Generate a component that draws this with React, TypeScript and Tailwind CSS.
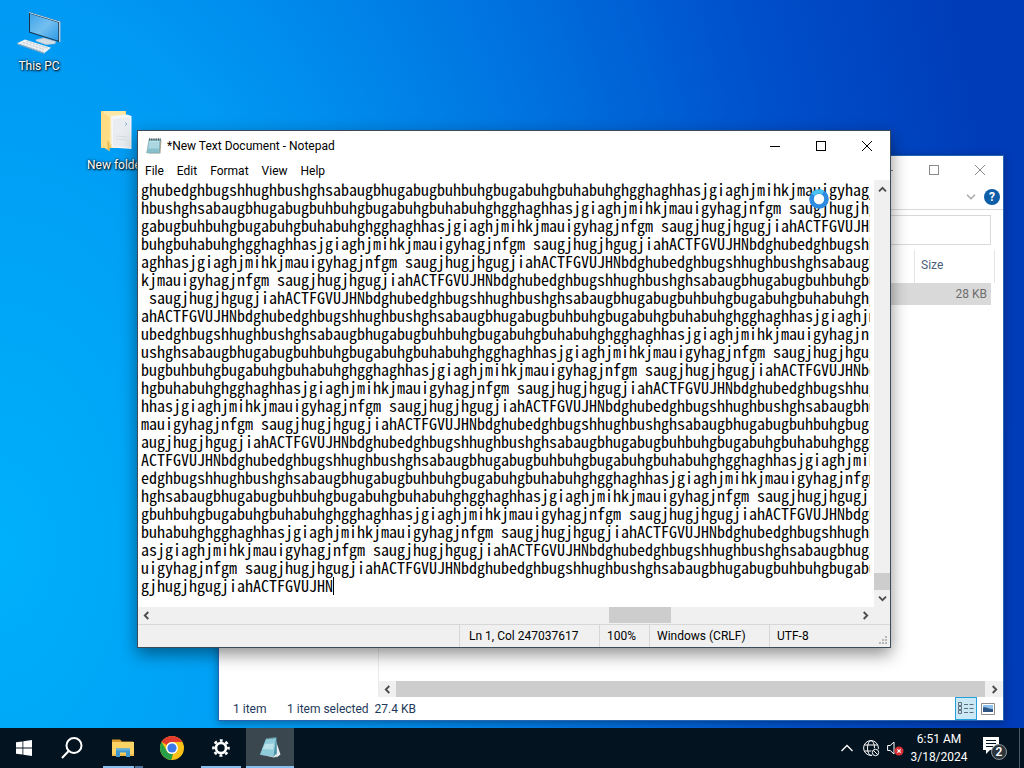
import React from 'react';
import type { ReactNode } from 'react';

const PHRASE =
  'saugjhugjhgugjiahACTFGVUJHNbdghubedghbugshhughbushghsabaugbhugabugbuhbuhgbugabuhgbuhabuhghgghaghhasjgiaghjmihkjmauigyhagjnfgm ';

// Notepad breaks very long lines every 1024 characters, so each row starts
// 16 characters further into the phrase than the one above it.
const ROWS = 23;
const FIRST_START = 29;
const SHIFT = 1024 % PHRASE.length;

const documentText = Array.from({ length: ROWS }, (_, i) => {
  const start = (FIRST_START + i * SHIFT) % PHRASE.length;
  const length = i === ROWS - 1 ? 24 : 96;
  return (PHRASE + PHRASE).slice(start, start + length);
}).join('\n');

const MinimizeIcon = () => (
  <svg width="10" height="10" viewBox="0 0 10 10" stroke="currentColor" shapeRendering="crispEdges">
    <path d="M0 5.5h10" />
  </svg>
);

const MaximizeIcon = () => (
  <svg width="10" height="10" viewBox="0 0 10 10" fill="none" stroke="currentColor" shapeRendering="crispEdges">
    <rect x="0.5" y="0.5" width="9" height="9" />
  </svg>
);

const CloseIcon = () => (
  <svg width="10" height="10" viewBox="0 0 10 10" stroke="currentColor">
    <path d="M0 0l10 10M10 0L0 10" />
  </svg>
);

const ArrowIcon = ({ d }: { d: string }) => (
  <svg width="9" height="9" viewBox="0 0 9 9" fill="none" stroke="#4d4d4d" strokeWidth="1.9">
    <path d={d} />
  </svg>
);

const UP = 'M1 6.3l3.5-3.5L8 6.3';
const DOWN = 'M1 2.7l3.5 3.5L8 2.7';
const LEFT = 'M6.3 1L2.8 4.5 6.3 8';
const RIGHT = 'M2.7 1l3.5 3.5L2.7 8';

const NotepadIcon = ({ className }: { className: string }) => (
  <svg className={className} viewBox="0 0 16 16">
    <path d="M3.5 2h12l-1 13.6H3z" fill="#b9ae96" />
    <path d="M3 1.5h11.4L13.3 15H.7z" fill="#8cc3cf" stroke="#6f9aa3" strokeWidth=".5" />
    <path d="M3.4 3h9.8l-.5 7.5H2.4z" fill="#bfe4ea" />
    <path d="M2.9 5h9.8M2.7 7h9.8M2.4 9h9.9M2.1 11h10M1.9 13h10.1" stroke="#79b3c0" strokeWidth=".5" />
    <path d="M3.5.3v2.2M5.3.3v2.2M7.1.3v2.2M8.9.3v2.2M10.7.3v2.2M12.5.3v2.2M14.2.3v2.2" stroke="#3f4c52" strokeWidth=".9" />
  </svg>
);

const ThisPcIcon = () => (
  <svg width="48" height="48" viewBox="0 0 48 48">
    <defs>
      <linearGradient id="screen" x1="0" y1="0" x2="1" y2="1">
        <stop offset="0" stopColor="#3fa5e8" />
        <stop offset=".5" stopColor="#74bff0" />
        <stop offset="1" stopColor="#2c9ae6" />
      </linearGradient>
    </defs>
    <path d="M14 4l31 9.5v20.8L14 24.5z" fill="#17324a" />
    <path d="M14 4l31 9.5v1L14 5z" fill="#c9dcea" />
    <path d="M44 13.5l1.4.3v20.5l-1.4-.3z" fill="#b9c9d4" />
    <path d="M15 5.8l28.3 8.6v18.4L15 23.8z" fill="url(#screen)" />
    <path d="M27 29.5l7 2.2v2.3l-7-2z" fill="#b4c3cf" />
    <path d="M21 31.5l8-1.5 12 3.5-1 2.3-9 .9-10-3.7z" fill="#d3dde6" stroke="#9fb3c2" strokeWidth=".5" />
    <path d="M2 35.2l8-3.7 26 8.3-6.5 5.2z" fill="#eef2f5" />
    <path d="M2 35.2L29.5 45v.9L2 36.2z" fill="#93a9ba" />
    <path d="M8 34.5l22 7.3M11.5 33.3l21 6.9M5 36l23 7.6" stroke="#a9b7c2" strokeWidth=".7" strokeDasharray="2.4 .9" />
  </svg>
);

const FolderIcon = () => (
  <svg width="32" height="45" viewBox="0 0 32 45">
    <path d="M1 1h25v37H1z" fill="#f2d37b" />
    <path d="M3 1h22v33H3z" fill="#fbe7a6" />
    <path d="M11 6l16-1.5 4.5 1.5V39l-20-1.5z" fill="#f4f6f8" />
    <path d="M13 9l17-2v30l-17-1z" fill="#e9edf1" />
    <path d="M25 12.5l2 1.5-2 2" stroke="#7fa6d9" strokeWidth=".8" fill="none" />
    <path d="M16 26l11 1M16 29l11 1" stroke="#d3dae0" strokeWidth=".8" />
    <path d="M1 1l8.500 6.500V41L1 36z" fill="#ffdc83" />
    <path d="M7.5 30l2 3v8l-2-1.4z" fill="#e8b84e" />
  </svg>
);

const WindowControls = ({ color, size }: { color: string; size: string }) => (
  <div className={`flex ${color}`}>
    <button aria-label="Minimize" className={`flex w-[46px] items-center justify-center ${size}`}>
      <MinimizeIcon />
    </button>
    <button aria-label="Maximize" className={`flex w-[46px] items-center justify-center ${size}`}>
      <MaximizeIcon />
    </button>
    <button aria-label="Close" className={`flex w-[46px] items-center justify-center ${size}`}>
      <CloseIcon />
    </button>
  </div>
);

const DesktopIcon = ({ label, className, children }: { label: string; className: string; children: ReactNode }) => (
  <button className={`absolute flex w-20 flex-col items-center gap-[2px] text-white ${className}`}>
    {children}
    <span className="text-xs [text-shadow:1px_1px_2px_#000,0_0_3px_#000]">{label}</span>
  </button>
);

const ExplorerWindow = () => (
  <section
    aria-label="File Explorer"
    className="absolute left-[218px] top-[155px] flex h-[566px] w-[786px] flex-col border border-[#2565b4] bg-white text-xs shadow-[0_2px_8px_rgba(0,0,0,0.35)]"
  >
    <header className="flex justify-end">
      <WindowControls color="text-[#8a8a8a]" size="h-7" />
    </header>
    <div className="flex h-[26px] items-center justify-end gap-2 border-b border-[#d9dadb] pr-[3px]">
      <button aria-label="Expand the ribbon">
        <svg width="10" height="6" viewBox="0 0 10 6" fill="none" stroke="#a8a8a8" strokeWidth="1.5">
          <path d="M1 .8l4 4 4-4" />
        </svg>
      </button>
      <button
        aria-label="Help"
        className="flex h-4 w-4 items-center justify-center rounded-full bg-[#0f5ea8] text-xs font-bold text-white"
      >
        ?
      </button>
    </div>
    <div className="flex px-3 py-[5px]">
      <input aria-label="Search" type="text" className="h-[30px] w-full border border-[#d9d9d9] outline-none" />
    </div>
    <div className="flex min-h-0 grow">
      <nav aria-label="Folders" className="w-40 border-r border-[#ececec]" />
      <div className="flex min-w-0 grow flex-col">
        <table className="w-[616px] table-fixed border-separate border-spacing-0">
          <thead>
            <tr className="h-[33px] text-left text-[#4c607a]">
              <th aria-label="Name" />
              <th className="w-[81px] border-x border-[#e5e5e5] pb-[3px] pl-[6px] font-normal">Size</th>
            </tr>
          </thead>
          <tbody>
            <tr className="h-[22px] text-right text-[#6d6d6d]">
              <td className="bg-[#d9d9d9]" />
              <td className="border-r-4 border-white bg-[#d9d9d9] pr-1">28 KB</td>
            </tr>
          </tbody>
        </table>
        <div className="mt-auto flex h-4 items-center bg-[#f0f0f0]">
          <button aria-label="Scroll left" className="flex w-[17px] justify-center">
            <ArrowIcon d={LEFT} />
          </button>
          <div className="h-full grow bg-[#cdcdcd]" />
          <button aria-label="Scroll right" className="flex w-[18px] justify-center">
            <ArrowIcon d={RIGHT} />
          </button>
        </div>
      </div>
    </div>
    <footer className="flex h-[23px] items-center pl-[14px] text-[#1e395b]">
      <span className="w-[54px]">1 item</span>
      <span>1 item selected&nbsp; 27.4 KB</span>
      <div className="ml-auto flex h-full items-center pr-1">
        <button
          aria-label="Details view"
          className="flex h-[23px] w-[22px] items-center justify-center border border-[#26a0da] bg-[#cbe8f6]"
        >
          <svg width="16" height="13" viewBox="0 0 16 13" fill="none" stroke="#5f6f7c" strokeWidth="1">
            <path d="M.5.5h3v3h-3zM.5 4.5h3v3h-3zM.5 8.5h3v3h-3z" />
            <path d="M6 2.5h4M11.5 2.5h4M6 6.5h4M11.5 6.5h4M6 10.5h4M11.5 10.5h4" />
          </svg>
        </button>
        <button aria-label="Large icons view" className="flex h-[23px] w-[22px] items-center justify-center">
          <svg width="14" height="12" viewBox="0 0 14 12">
            <path d="M.5.5h13v11H.5z" fill="#fff" stroke="#8b8b8b" />
            <path d="M2 2h10v7H2z" fill="#8fc1ea" />
            <path d="M2 4.5c4-1 6 2 10 1.5v3H2z" fill="#2d5583" />
          </svg>
        </button>
      </div>
    </footer>
  </section>
);

const NotepadWindow = () => (
  <section
    aria-label="Notepad"
    className="absolute left-[137px] top-[130px] flex h-[518px] w-[754px] flex-col border border-[#3b4b59] bg-white text-xs text-black shadow-[0_6px_16px_rgba(0,0,0,0.45)]"
  >
    <header className="flex h-[30px] items-center justify-between pl-2">
      <div className="flex items-center gap-[5px]">
        <NotepadIcon className="h-4 w-4" />
        <h1>*New Text Document - Notepad</h1>
      </div>
      <WindowControls color="text-black" size="h-[30px]" />
    </header>
    <nav className="flex h-[19px] items-center gap-[13px] pl-[7px]">
      <button>File</button>
      <button>Edit</button>
      <button>Format</button>
      <button>View</button>
      <button>Help</button>
    </nav>
    <div className="flex grow">
      <div className="relative grow pl-[3px] pr-1">
        <textarea
          aria-label="Text editor"
          spellCheck={false}
          wrap="off"
          defaultValue={documentText}
          className="block h-full w-full resize-none overflow-hidden whitespace-pre font-['Noto_Sans_Mono_CJK_SC','Liberation_Mono',monospace] text-base leading-[18px] outline-none"
        />
        {/* caret */}
        <span className="absolute left-[195px] top-[397px] h-[18px] w-px bg-black" />
      </div>
      <div className="flex w-4 flex-col items-center bg-[#f0f0f0]">
        <button aria-label="Scroll up" className="flex h-[19px] items-center">
          <ArrowIcon d={UP} />
        </button>
        <div className="mt-auto h-[17px] w-full bg-[#cdcdcd]" />
        <button aria-label="Scroll down" className="flex h-[17px] items-center">
          <ArrowIcon d={DOWN} />
        </button>
      </div>
    </div>
    <div className="flex h-[17px] items-center bg-[#f0f0f0] pr-[17px]">
      <button aria-label="Scroll left" className="flex w-4 justify-center">
        <ArrowIcon d={LEFT} />
      </button>
      <div className="flex h-full grow justify-end pr-[186px]">
        <div className="h-4 w-[62px] bg-[#cdcdcd]" />
      </div>
      <button aria-label="Scroll right" className="flex w-4 justify-center">
        <ArrowIcon d={RIGHT} />
      </button>
    </div>
    <footer className="flex h-[23px] items-stretch justify-end border-t border-[#d7d7d7] bg-[#f0f0f0]">
      <span className="flex w-[140px] items-center border-l border-[#d7d7d7] pl-[9px]">Ln 1, Col 247037617</span>
      <span className="flex w-[50px] items-center border-l border-[#d7d7d7] pl-[7px]">100%</span>
      <span className="flex w-[120px] items-center border-l border-[#d7d7d7] pl-[7px]">Windows (CRLF)</span>
      <span className="flex w-[121px] items-center justify-between border-l border-[#d7d7d7] pl-[7px]">
        UTF-8
        <svg className="self-end" width="11" height="11" viewBox="0 0 11 11" fill="#b8b8b8">
          <path d="M6 0h2v2H6zM3 3h2v2H3zM6 3h2v2H6zM0 6h2v2H0zM3 6h2v2H3zM6 6h2v2H6z" />
        </svg>
      </span>
    </footer>
  </section>
);

const Taskbar = () => (
  <footer className="relative flex h-10 items-stretch bg-[#03131f] text-white">
    <button aria-label="Start" className="flex w-12 items-center justify-center">
      <svg width="16" height="16" viewBox="0 0 16 16" fill="#fff">
        <path d="M0 2.3l6.5-.9v6.2H0zM7.3 1.3L16 0v7.6H7.3zM0 8.4h6.5v6.2L0 13.7zM7.3 8.4H16V16l-8.7-1.2z" />
      </svg>
    </button>
    <button aria-label="Search" className="flex w-12 items-center justify-center">
      <svg width="24" height="24" viewBox="0 0 24 24" fill="none" stroke="#fff" strokeWidth="2">
        <circle cx="14" cy="9.5" r="7.5" />
        <path d="M8.7 15L2 22" />
      </svg>
    </button>
    <div className="ml-[3px] flex gap-px">
      <button aria-label="File Explorer" className="flex w-12 flex-col items-center justify-between px-1 pt-[10px]">
        <svg width="22" height="20" viewBox="0 0 22 20">
          <path d="M0 1.5h8l2 2h11v6H0z" fill="#d9992b" />
          <path d="M0 4h22v14H0z" fill="#fbd264" />
          <path d="M0 16h22v2H0z" fill="#f0bd4c" />
          <path d="M4 19v-8.5h14V19h-4v-4.5H8V19z" fill="#3f95cf" />
          <path d="M4 10.5h14v2H4z" fill="#5fb0de" />
        </svg>
        <span className="flex w-full">
          <span className="h-[2px] grow bg-[#86bfee]" />
          <span className="ml-px h-[2px] w-2 bg-[#4a7499]" />
        </span>
      </button>
      <button aria-label="Google Chrome" className="flex w-12 items-center justify-center">
        <svg width="24" height="24" viewBox="0 0 24 24">
          <circle cx="12" cy="12" r="12" fill="#fbc116" />
          <path d="M12 0a12 12 0 0 1 10.4 6H12a6 6 0 0 0-5.2 3L1.6 6A12 12 0 0 1 12 0z" fill="#e33b2e" />
          <path d="M1.6 6l5.2 9A6 6 0 0 0 12 18l1.5-.2L11.5 24A12 12 0 0 1 1.6 6z" fill="#27a048" />
          <path d="M17.2 15L12 24h-.6L13 17.9z" fill="#fbc116" />
          <circle cx="12" cy="12" r="6" fill="#fff" />
          <circle cx="12" cy="12" r="4.6" fill="#3b79e8" />
        </svg>
      </button>
      <button aria-label="Settings" className="flex w-12 flex-col items-center justify-between px-1 pt-[11px]">
        <svg width="18" height="18" viewBox="0 0 18 18" fill="none" stroke="#fff">
          <circle cx="9" cy="9" r="5" strokeWidth="2.6" />
          <circle cx="9" cy="9" r="7.5" strokeWidth="2.6" strokeDasharray="2.9 2.99" strokeDashoffset="1.45" />
        </svg>
        <span className="h-[2px] w-full bg-[#86bfee]" />
      </button>
      <button aria-label="Notepad" className="flex w-12 flex-col items-center justify-between bg-[#3b474f] pt-2">
        <svg width="24" height="24" viewBox="0 0 24 24">
          <path d="M17 2l5.5 16.5-4 3L14 6z" fill="#e9eef0" />
          <path d="M8 2.5L18.5 1 19 21 2 19z" fill="#4a93a8" />
          <path d="M8 3l10-1-2.5 18.5L2 18.5z" fill="#8fcbd8" />
          <path d="M7 8l9-.5-.6 6L4.5 13z" fill="#b9e2ea" />
          <path d="M2 18.5l13.5 2 3-3 .8 3-3.3 1z" fill="#dfe6e8" />
          <path d="M8 2.8l10-1.3" stroke="#6a7e86" strokeWidth="1.5" strokeDasharray="1 1" />
        </svg>
        <span className="h-[2px] w-full bg-[#86bfee]" />
      </button>
    </div>

    {/* system tray */}
    <div className="ml-auto flex items-center">
      <button aria-label="Show hidden icons" className="flex w-6 justify-center">
        <svg width="12" height="8" viewBox="0 0 12 8" fill="none" stroke="#fff" strokeWidth="1.3">
          <path d="M.5 7L6 1.5 11.5 7" />
        </svg>
      </button>
      <button aria-label="Network" className="flex w-6 justify-center">
        <svg width="17" height="17" viewBox="0 0 17 17" fill="none" stroke="#fff">
          <circle cx="8" cy="8" r="7.4" />
          <ellipse cx="8" cy="8" rx="3.5" ry="7.4" />
          <path d="M1.5 5h13M1.5 11h13" />
          <circle cx="12.5" cy="12.5" r="4" fill="#03131f" stroke="#03131f" />
          <circle cx="12.5" cy="12.5" r="3.2" />
          <path d="M10.3 10.3l4.4 4.4" />
        </svg>
      </button>
      <button aria-label="Volume" className="flex w-6 justify-center">
        <svg width="17" height="16" viewBox="0 0 17 16" fill="none" stroke="#fff">
          <path d="M.6 5.5h2.6L7 2v12L3.2 10.5H.6z" />
          <circle cx="12" cy="11" r="4.5" fill="#d92f34" stroke="none" />
          <path d="M10.3 9.3l3.4 3.4M13.7 9.3l-3.4 3.4" strokeWidth="1.2" />
        </svg>
      </button>
      <div className="flex w-16 flex-col items-center text-xs leading-[18px]">
        <time>6:51 AM</time>
        <time>3/18/2024</time>
      </div>
      <button aria-label="Notifications" className="flex w-12 justify-center">
        <svg width="26" height="26" viewBox="0 0 26 26">
          <path d="M1 2h16v13H8l-4 4v-4H1z" fill="#fff" />
          <path d="M4 5.5h10M4 8.5h10M4 11.5h7" stroke="#03131f" />
          <circle cx="17" cy="17" r="7.5" fill="#2b353c" stroke="#8d9499" />
          <text x="17" y="21" textAnchor="middle" fontSize="12" fontWeight="600" fill="#fff">
            2
          </text>
        </svg>
      </button>
      <button aria-label="Show desktop" className="h-full w-[5px] border-l border-[#4b5860]" />
    </div>
  </footer>
);

const App = () => {
  return (
    <div className="flex min-h-screen flex-col overflow-hidden bg-[#0078e0] font-['Roboto','Open_Sans',sans-serif]">
      <main className="relative grow bg-[radial-gradient(110%_250%_at_0%_75%,#00b0fb_0%,#0099f3_30%,#0074e0_52%,#0050cc_72%,#003cb8_90%)]">
        <DesktopIcon label="This PC" className="-left-px top-2">
          <ThisPcIcon />
        </DesktopIcon>
        <DesktopIcon label="New folder" className="left-[76px] top-[110px]">
          <FolderIcon />
        </DesktopIcon>
        <ExplorerWindow />
        <NotepadWindow />
        {/* busy cursor */}
        <svg className="absolute left-[809px] top-[189px]" width="20" height="20" viewBox="0 0 20 20" fill="none">
          <circle cx="10" cy="10" r="5.5" fill="#fff" />
          <circle cx="10" cy="10" r="7.5" stroke="#2f8be0" strokeWidth="4.6" />
          <path d="M4 5.5A7.5 7.5 0 0 1 14 3.7" stroke="#4cc4f2" strokeWidth="4" />
        </svg>
      </main>
      <Taskbar />
    </div>
  );
};

export default App;
